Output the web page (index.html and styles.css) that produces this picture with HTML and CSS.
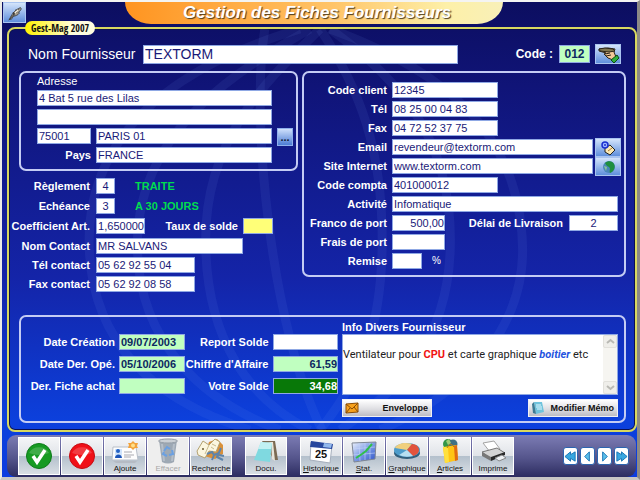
FILE: index.html
```html
<!DOCTYPE html>
<html lang="fr">
<head>
<meta charset="utf-8">
<title>Gestion des Fiches Fournisseurs</title>
<link rel="stylesheet" href="styles.css">
</head>
<body>
<main class="window">
  <header class="titlebar">
    <button class="icon-btn quill" type="button" aria-label="Notes">
      <svg viewBox="0 0 24 20" width="22" height="18"><path d="M6 17C8 12 11 7 18 4C20 5 18 8 16 9L17 10C15 13 12 13 10 14L8 17Z" fill="#a39a88" stroke="#3a4450"/><path d="M5 18L16 6M10 9L11 13M13 6L14 10" stroke="#33302c" fill="none"/><path d="M12 9L15 6L16 7L12 11Z" fill="#f4f0e4"/></svg>
    </button>
    <h1 class="title">Gestion des Fiches Fournisseurs</h1>
  </header>

  <form class="panel">
    <svg class="swoosh" viewBox="0 0 624 400" preserveAspectRatio="none" aria-hidden="true">
      <g fill="none" stroke="#7f9cf0" stroke-opacity=".09" stroke-width="9">
        <path d="M290 0C190 30 75 90 80 220C84 310 140 370 240 400"/>
        <path d="M300 0C230 40 128 100 128 215C128 310 190 370 270 400"/>
        <path d="M310 0C270 40 196 100 196 210C196 310 240 370 300 400"/>
        <path d="M310 0C350 60 372 120 372 210C372 300 350 350 310 400"/>
        <path d="M320 0C390 50 440 110 440 210C440 310 390 360 330 400"/>
        <path d="M320 0C430 40 510 100 512 220C512 310 440 370 370 400"/>
        <path d="M255 0C240 90 262 300 312 400"/>
      </g>
    </svg>
    <strong class="brand">Gest-Mag 2007</strong>

    <div class="name-row">
      <label class="name-label" for="nom">Nom Fournisseur</label>
      <input class="field name-field" id="nom" value="TEXTORM">
      <label class="code-label" for="code">Code :</label>
      <input class="field green code-field" id="code" value="012">
      <button class="icon-btn hand" type="button" aria-label="Choisir un fournisseur">
        <svg viewBox="0 0 24 18" width="24" height="18"><path d="M3 4L12 3L19 4L18 7L20 12L17 15L12 13L8 9L10 8L3 6Z" fill="#f3c998" stroke="#2b2418"/><path d="M3 4L9 3L17 4L19 6L13 7L4 6Z" fill="#807852" stroke="#2b2418"/><path d="M9 9L14 8M10 11L15 10" stroke="#2b2418" fill="none"/><path d="M15 15L21 10L23 13L18 18Z" fill="#2fb03c" stroke="#0b4a15"/></svg>
      </button>
    </div>

    <div class="columns">
      <div class="left">
        <section class="box address">
          <label class="plain" for="adr1">Adresse</label>
          <input class="field wide" id="adr1" value="4 Bat 5 rue des Lilas">
          <input class="field wide" id="adr2" aria-label="Adresse, suite">
          <input class="field first" id="cp" aria-label="Code postal" value="75001">
          <input class="field" id="ville" aria-label="Ville" value="PARIS 01">
          <button class="dots" type="button">...</button>
          <label class="lbl first" for="pays">Pays</label>
          <input class="field" id="pays" value="FRANCE">
        </section>

        <div class="terms">
          <label class="lbl" for="regl">Règlement</label>
          <div class="line"><input class="field w19 center" id="regl" value="4"><output class="result" for="regl">TRAITE</output></div>
          <label class="lbl" for="ech">Echéance</label>
          <div class="line"><input class="field w19 center" id="ech" value="3"><output class="result" for="ech">A 30 JOURS</output></div>
          <label class="lbl" for="coef">Coefficient Art.</label>
          <div class="line"><input class="field w49 right" id="coef" value="1,650000"><label class="lbl taux" for="taux">Taux de solde</label><input class="field w30 yellow" id="taux"></div>
        </div>
        <div class="terms contact">
          <label class="lbl" for="nomc">Nom Contact</label>
          <input class="field w147" id="nomc" value="MR SALVANS">
          <label class="lbl" for="telc">Tél contact</label>
          <input class="field w99" id="telc" value="05 62 92 55 04">
          <label class="lbl" for="faxc">Fax contact</label>
          <input class="field w99" id="faxc" value="05 62 92 08 58">
        </div>
      </div>

      <section class="box details">
        <label class="lbl" for="client">Code client</label>
        <input class="field w106" id="client" value="12345">
        <label class="lbl" for="tel">Tél</label>
        <input class="field w106" id="tel" value="08 25 00 04 83">
        <label class="lbl" for="fax">Fax</label>
        <input class="field w106" id="fax" value="04 72 52 37 75">
        <label class="lbl" for="email">Email</label>
        <div class="line"><input class="field grow" id="email" value="revendeur@textorm.com">
          <button class="icon-btn side" type="button" aria-label="Envoyer un email"><svg viewBox="0 0 24 18" width="24" height="18"><path d="M9 9L14 6L19 11L14 16L9 13Z" fill="#fbe9b4" stroke="#222" /><path d="M12 12L16 9" stroke="#b07a2a"/><circle cx="9" cy="6" r="3" fill="#9fb6ff" stroke="#1a2fd0" stroke-width="1.5"/><circle cx="9" cy="6" r="1" fill="#1a2fd0"/></svg></button></div>
        <label class="lbl" for="site">Site Internet</label>
        <div class="line"><input class="field grow" id="site" value="www.textorm.com">
          <button class="icon-btn side" type="button" aria-label="Ouvrir le site"><svg viewBox="0 0 24 18" width="24" height="18"><circle cx="13" cy="9" r="6" fill="#4a86b8"/><path d="M9 5C12 2 17 3 18 6C20 10 17 14 14 15C13 12 15 11 13 9C11 8 10 7 9 5Z" fill="#1f8f3e"/><path d="M8 8L11 9L10 13Z" fill="#8cc79a"/></svg></button></div>
        <label class="lbl" for="compta">Code compta</label>
        <input class="field w106" id="compta" value="401000012">
        <label class="lbl" for="act">Activité</label>
        <input class="field activity" id="act" value="Infomatique">
        <label class="lbl" for="franco">Franco de port</label>
        <div class="line activity"><input class="field w53 right" id="franco" value="500,00"><label class="lbl delai" for="delai">Délai de Livraison</label><input class="field w49 center" id="delai" value="2"></div>
        <label class="lbl" for="frais">Frais de port</label>
        <input class="field w53" id="frais">
        <label class="lbl" for="remise">Remise</label>
        <div class="line"><input class="field w30" id="remise"><span class="pct">%</span></div>
      </section>
    </div>

    <section class="box summary">
      <div class="figures">
        <label class="lbl" for="crea">Date Création</label>
        <input class="field green" id="crea" value="09/07/2003">
        <label class="lbl" for="report">Report Solde</label>
        <input class="field" id="report">
        <label class="lbl" for="oper">Date Der. Opé.</label>
        <input class="field green" id="oper" value="05/10/2006">
        <label class="lbl" for="ca">Chiffre d'Affaire</label>
        <input class="field green right" id="ca" value="61,59">
        <label class="lbl" for="achat">Der. Fiche achat</label>
        <input class="field green" id="achat">
        <label class="lbl" for="solde">Votre Solde</label>
        <input class="field dark right" id="solde" value="34,68">
      </div>
      <div class="memo-col">
        <h2 class="memo-title" id="memo-title">Info Divers Fournisseur</h2>
        <div class="memo">
          <div class="memo-text" role="textbox" aria-labelledby="memo-title" contenteditable="true">Ventilateur pour <b>CPU</b> et carte graphique <i>boitier</i> etc</div>
          <div class="scroll">
            <button type="button" aria-label="Monter"><svg viewBox="0 0 9 9" width="9" height="9"><path d="M1 6L4.500 3L8 6" fill="none" stroke="#b9b9b4" stroke-width="2"/></svg></button>
            <button type="button" aria-label="Descendre"><svg viewBox="0 0 9 9" width="9" height="9"><path d="M1 3L4.500 6L8 3" fill="none" stroke="#b9b9b4" stroke-width="2"/></svg></button>
          </div>
        </div>
        <div class="memo-actions">
          <button class="silver" type="button"><svg viewBox="0 0 14 12" width="14" height="12"><path d="M1 2L13 1V10L1 11Z" fill="#f7a11c" stroke="#8a4c05"/><path d="M1 2L7 7L13 1M1 11L5 6M13 10L9 5" fill="none" stroke="#8a4c05"/></svg>Enveloppe</button>
          <button class="silver" type="button"><svg viewBox="0 0 14 14" width="14" height="14"><path d="M3 1H11L13 11L5 13Z" fill="#6fc3dc"/><path d="M1 3L3 1L5 13L2 12Z" fill="#3d7a93"/><path d="M5 4H10M5 6H11M6 8H11" stroke="#e4f8ff"/></svg>Modifier Mémo</button>
        </div>
      </div>
    </section>
  </form>

  <nav class="toolbar">
    <div class="group">
      <button class="tool" type="button" aria-label="Valider"><svg viewBox="0 0 28 28" width="28" height="28"><circle cx="14" cy="14" r="12.500" fill="#169a22" stroke="#0c7a18"/><path d="M4 11A11 10 0 0 1 24 11Q14 15 4 11Z" fill="#fff" opacity=".18"/><path d="M8 14L12 20L20 8" fill="none" stroke="#fff" stroke-width="3.500"/></svg></button>
      <button class="tool" type="button" aria-label="Annuler"><svg viewBox="0 0 28 28" width="28" height="28"><circle cx="14" cy="14" r="12.500" fill="#f01018" stroke="#c40a10"/><path d="M4 11A11 10 0 0 1 24 11Q14 15 4 11Z" fill="#fff" opacity=".18"/><path d="M8 14L12 20L20 8" fill="none" stroke="#fff" stroke-width="3.500"/></svg></button>
      <button class="tool" type="button"><svg viewBox="0 0 30 24" width="30" height="24"><path d="M3 7H26L28 20H2Z" fill="#fdfdfd" stroke="#b8bfc9"/><path d="M3 21H27L25 23H6Z" fill="#b5bbc4"/><path d="M5 9H12V18H5Z" fill="#cfe3fb"/><circle cx="8" cy="11" r="2" fill="#2462c4"/><path d="M5 18C5 14 11 13 12 18Z" fill="#1c54b8"/><path d="M14 12H22M14 15H24M14 17H21" stroke="#a9a9b0"/><path d="M23 1L25 3L28 3L27 6L28 8L25 8L23 10L21 8L18 8L19 5L18 3L21 3Z" fill="#f2a23a"/><circle cx="23" cy="5.500" r="2" fill="#ffe08a"/></svg><span>Ajoute</span></button>
      <button class="tool" type="button" disabled><svg viewBox="0 0 24 26" width="24" height="26"><path d="M3 2L21 2L18 24Q12 27 6 24Z" fill="#8b98a6"/><ellipse cx="12" cy="3" rx="9.500" ry="2" fill="#c3c9d0" stroke="#808b97"/><path d="M6 6L8 23M18 6L16 23" stroke="#a9b4c0" stroke-width="2"/><path d="M8 13L11 9L14 11M16 12L17 16L13 17M11 18L7 16L8 14" fill="none" stroke="#4a8de0" stroke-width="2"/></svg><span>Effacer</span></button>
      <button class="tool" type="button"><svg viewBox="0 0 32 26" width="32" height="26"><path d="M14 4L22 1L28 7L28 16L20 21L9 18Z" fill="#d9903a"/><path d="M2 13L8 3L14 7L20 1L25 4L21 14L14 13L10 20L3 17Z" fill="#fbf6df" stroke="#b3a272"/><path d="M14 7L10 16M17 6L21 8M16 9L19 11" stroke="#c9bb8c"/><circle cx="8" cy="11" r="1" fill="#6a5a30"/><path d="M12 16L17 14L19 17L24 15M19 17L17 22M26 10L22 19L28 22M24 17L29 18" fill="none" stroke="#5d84ab" stroke-width="2"/></svg><span>Recherche</span></button>
    </div>
    <div class="group">
      <button class="tool" type="button"><svg viewBox="0 0 28 24" width="28" height="24"><path d="M10 1H23L26 20L22 20Z" fill="#7b6a52"/><path d="M11 2H21L23 21L20 19L19 3Z" fill="#e8e4da"/><path d="M9 2L20 3L18 22L2 20Z" fill="#7fd9e0"/><path d="M9 2L20 3L19 9L6 9Z" fill="#c1f1f3"/></svg><span>Docu.</span></button>
    </div>
    <div class="group">
      <button class="tool" type="button"><svg viewBox="0 0 26 24" width="26" height="24"><path d="M3 2L24 5L22 23L2 20Z" fill="#fff" stroke="#a5aebc"/><path d="M3 1L25 4L24 9L2 7Z" fill="#28479d"/><path d="M16 3L24 4L23 8L15 7Z" fill="#92b8ec"/><text x="7" y="18" class="cal">25</text></svg><span><u>H</u>istorique</span></button>
      <button class="tool" type="button"><svg viewBox="0 0 28 24" width="28" height="24"><defs><linearGradient id="st" x2="1" y2="1"><stop stop-color="#eef3fc"/><stop offset=".5" stop-color="#7e9ce6"/><stop offset="1" stop-color="#2a50c8"/></linearGradient></defs><path d="M2 3L26 2L25 19L4 22Z" fill="url(#st)" stroke="#7f8794"/><path d="M9 3L10 21M15 3V20M20 3V19M3 9L25 7M3 15L25 13" stroke="#c7d5f6" stroke-opacity=".6"/><path d="M6 18L12 14L16 11L22 4" stroke="#2fbf4c" stroke-width="2" fill="none"/></svg><span><u>S</u>tat.</span></button>
      <button class="tool" type="button"><svg viewBox="0 0 28 22" width="28" height="22"><ellipse cx="14" cy="11" rx="13" ry="6" fill="#315f7d"/><ellipse cx="14" cy="8" rx="13" ry="7" fill="#4d9ccb"/><path d="M14 8L2 6C4 1 13 0 19 2Z" fill="#f0cf7d"/><path d="M14 8L19 2C26 2 30 11 20 14Z" fill="#e2533c"/><path d="M14 8L20 14Q12 16 6 13Z" fill="#b7dff1"/></svg><span><u>G</u>raphique</span></button>
      <button class="tool" type="button"><svg viewBox="0 0 22 26" width="22" height="26"><circle cx="9" cy="6" r="5" fill="#329648"/><circle cx="14" cy="6" r="4.500" fill="#3f7084"/><path d="M7 3L10 1L12 5L9 7Z" fill="#9ccc74"/><path d="M4 9L18 7L19 22L6 25Z" fill="#ffc414"/><path d="M15 8L18 7L19 22L16 23Z" fill="#e06b12"/><path d="M4 9L6 25L10 24L9 9Z" fill="#ffe03d"/><path d="M8 10Q11 3 15 9" fill="none" stroke="#c07a10"/></svg><span><u>A</u>rticles</span></button>
      <button class="tool" type="button"><svg viewBox="0 0 28 24" width="28" height="24"><path d="M4 3L15 1L21 9L11 12Z" fill="#fff" stroke="#a3a3a3"/><path d="M3 12L18 8L26 13L12 19Z" fill="#d4d4d4" stroke="#777"/><path d="M3 12L12 17V21L3 16Z" fill="#777"/><path d="M12 17L26 12V15L12 21Z" fill="#292929"/><path d="M16 18L23 15L27 18L20 21Z" fill="#eef1f4" stroke="#888"/></svg><span>Imprime</span></button>
    </div>
    <div class="pager">
      <button type="button" aria-label="Premier"><svg viewBox="0 0 14 14" width="13" height="13"><path d="M7 2V5L12 2V12L7 9V12L1 7Z" fill="#38a8e0" stroke="#1673b4"/></svg></button>
      <button type="button" aria-label="Précédent"><svg viewBox="0 0 14 14" width="13" height="13"><path d="M9 2V12L4 7Z" fill="#5cc0ea" stroke="#1673b4"/></svg></button>
      <button type="button" aria-label="Suivant"><svg viewBox="0 0 14 14" width="13" height="13"><path d="M5 2V12L10 7Z" fill="#5cc0ea" stroke="#1673b4"/></svg></button>
      <button type="button" aria-label="Dernier"><svg viewBox="0 0 14 14" width="13" height="13"><path d="M7 2V5L2 2V12L7 9V12L13 7Z" fill="#38a8e0" stroke="#1673b4"/></svg></button>
    </div>
  </nav>
</main>
</body>
</html>
```
FILE: styles.css
```css
* { box-sizing: border-box; }

body {
  margin: 0;
  font-family: "Liberation Sans", Arial, sans-serif;
  font-size: 11px;
  line-height: 16px;
  color: #fff;
}

button, input { font: inherit; margin: 0; }
button { padding: 0; }
svg { display: block; flex: none; }

.window {
  min-height: 100vh;
  display: flex;
  flex-direction: column;
  border-style: solid;
  border-width: 2px 3px 3px 2px;
  border-color: #f4f4f2 #8c8a86 #c8c6c4 #ecebe6;
  background: linear-gradient(#0c0e60, #101478 18%, #1424a8 58%, #0c40dc 88%, #0c3ce0);
}

.titlebar {
  display: flex;
  align-items: flex-start;
  height: 25px;
  padding-left: 1px;
}

.title {
  width: 378px;
  height: 22px;
  margin: 0 auto 0 99px;
  padding-left: 58px;
  border-radius: 0 0 26px 26px / 0 0 22px 22px;
  background: linear-gradient(90deg, #ff9420, #ffc468 55%, #fdf0a8 85%, #f8f0b8);
  font-size: 17px;
  font-style: italic;
  line-height: 22px;
  white-space: nowrap;
  text-shadow: 1px 1px 1px #4a3a20;
}

.icon-btn {
  display: grid;
  place-items: center;
  flex: none;
  border: 1px solid #a9c4f0;
  background: linear-gradient(#d4e4fb, #5f8fdc);
}

.quill { width: 23px; height: 21px; }

.panel {
  position: relative;
  flex: 1;
  display: flex;
  flex-direction: column;
  margin: 0 0 3px 5px;
  padding: 15px 9px 7px 10px;
  border: 2px solid #d8d860;
  border-radius: 8px;
  box-shadow: inset 0 0 0 1px #0c1050;
}

.swoosh { position: absolute; inset: 0; width: 100%; height: 100%; }

.brand {
  position: absolute;
  top: -8px;
  left: 16px;
  padding: 0 6px;
  border-radius: 8px;
  background: linear-gradient(90deg, #fff200, #fffde0 70%);
  color: #111;
  font-family: "Liberation Sans Narrow", "Open Sans Condensed", "Liberation Sans", sans-serif;
  font-size: 10px;
  line-height: 14px;
}

.field {
  display: block;
  width: 100%;
  min-width: 0;
  height: 16px;
  padding: 0 1px;
  border: 1px solid #8fa8e4;
  border-radius: 0;
  background: #fff;
  color: #1a1a78;
  outline: 0;
}

.name-row {
  position: relative;
  display: flex;
  align-items: center;
  height: 20px;
  padding: 0 5px 0 9px;
}

.name-label { flex: none; width: 115px; font-size: 14px; white-space: nowrap; }
.name-field { flex: 1; height: 19px; font-size: 14px; }
.code-label {
  flex: none;
  width: 101px;
  padding-right: 6px;
  text-align: right;
  font-size: 12px;
  font-weight: bold;
}
.code-field { flex: none; width: 31px; height: 18px; margin-right: 5px; text-align: center; font-size: 12px; }
.hand { width: 26px; height: 20px; }

.columns {
  position: relative;
  display: grid;
  grid-template-columns: minmax(0, 279fr) minmax(0, 324fr);
  align-items: start;
  gap: 4px;
  margin-top: 7px;
}

.box {
  border: 2px solid #c4ccf4;
  border-radius: 7px;
}

.lbl { font-weight: bold; text-align: right; white-space: nowrap; }
.center { text-align: center; }
.right { padding: 0; text-align: right; }
.green { background: #c0ffc0; font-weight: bold; color: #0c2860; }
.dark { background: #087808; font-weight: bold; color: #fff; }
.yellow { background: #ffff78; }

.w19 { width: 19px; }
.w30 { width: 30px; }
.w49 { width: 49px; }
.w53 { width: 53px; }
.w99 { width: 99px; }
.w106 { width: 106px; }
.w147 { width: 147px; }

.address {
  display: grid;
  grid-template-columns: 54px minmax(0, 1fr) 16px;
  grid-template-rows: 14px;
  grid-auto-rows: 16px;
  gap: 3px 5px;
  padding: 0 3px 6px 16px;
}
.address .plain { grid-column: 1 / -1; }
.address .wide { grid-column: 1 / 3; }
.address .first { grid-column: 1; }

.dots {
  height: 18px;
  border: 1px solid #8fb0ec;
  background: linear-gradient(#cfe0fb, #4c7cd4);
  color: #101830;
  font-weight: bold;
  line-height: 12px;
}

.line { display: flex; min-width: 0; }
.line .field { flex: none; }
.line .grow { flex: 1; }

.terms {
  display: grid;
  grid-template-columns: 81px minmax(0, 1fr);
  gap: 4px 5px;
  margin: 7px 0 0 -9px;
}
.contact { gap: 3px 5px; margin-top: 4px; }
.terms .lbl { padding-right: 1px; }
.line .taux { width: 98px; padding-right: 5px; }
.result { margin-left: 20px; color: #00dc50; font-weight: bold; }

.details {
  display: grid;
  grid-template-columns: 83px minmax(0, 1fr);
  gap: 3px 5px;
  padding: 9px 3px 6px 0;
}
.side { width: 26px; height: 19px; margin: -1px 0 -2px 2px; }
.activity { width: calc(100% - 3px); }
.delai { flex: 1; padding-right: 6px; }
.pct { margin-left: 10px; font-size: 10px; }

.summary {
  position: relative;
  display: grid;
  grid-template-columns: minmax(0, 1fr) minmax(0, 276px);
  gap: 4px;
  margin-top: auto;
  padding: 3px 6px 4px 0;
}

.figures {
  display: grid;
  grid-template-columns: 94px minmax(0, 66px) 80px minmax(0, 66px);
  gap: 6px 4px;
  align-content: start;
  padding-top: 14px;
}
.figures .lbl { display: flex; justify-content: flex-end; }

.memo-title { margin: 0; font-size: 11px; line-height: 14px; }
.memo { display: flex; height: 61px; background: #fff; border: 1px solid #8fa8e4; }
.memo-text {
  flex: 1;
  padding: 12px 0 0;
  color: #222;
  font-family: Roboto, "Liberation Sans", sans-serif;
  outline: 0;
}
.memo-text b { color: #f01414; }
.memo-text i { color: #2454e0; font-weight: bold; }

.scroll {
  width: 14px;
  display: flex;
  flex-direction: column;
  justify-content: space-between;
  background: #f6f5f1;
}
.scroll button {
  display: grid;
  place-items: center;
  height: 13px;
  border: 1px solid #e2e1dc;
  border-radius: 2px;
  background: #efeeea;
}

.memo-actions { display: flex; justify-content: space-between; margin-top: 4px; }
.silver {
  display: flex;
  align-items: center;
  justify-content: space-between;
  width: 90px;
  height: 18px;
  padding: 0 3px 0 2px;
  border: 1px solid #f0f0f4;
  background: linear-gradient(#fff, #dcdce0 60%, #bcbcc4);
  color: #111;
  font-size: 9px;
  font-weight: bold;
  white-space: nowrap;
}

.toolbar {
  display: flex;
  align-items: center;
  gap: 13px;
  height: 42px;
  margin: 0 1px 0 5px;
  padding: 0 7px 0 11px;
  border-radius: 9px;
  background: linear-gradient(#7c7cb4, #55558c 55%, #2c2c60);
}

.group { display: flex; gap: 1px; }

.tool {
  width: 42px;
  height: 38px;
  display: flex;
  flex-direction: column;
  align-items: center;
  justify-content: flex-end;
  border: 1px solid #fff;
  background: linear-gradient(#f4f5f7, #e0e3e8 50%, #b4c0cc 51%, #d8dee4);
  color: #111;
  font-size: 8px;
  line-height: 10px;
}
.tool[aria-label] { justify-content: center; }
.tool:disabled { background: #eeeeee; color: #a8a8a8; }
.tool:disabled svg { opacity: .8; }
.cal { font-size: 11px; font-weight: bold; fill: #111; }

.pager { display: flex; gap: 2px; margin-left: auto; }
.pager button {
  display: grid;
  place-items: center;
  width: 15px;
  height: 18px;
  border: 1px solid #2c64b0;
  border-radius: 3px;
  background: #fff;
}
```
